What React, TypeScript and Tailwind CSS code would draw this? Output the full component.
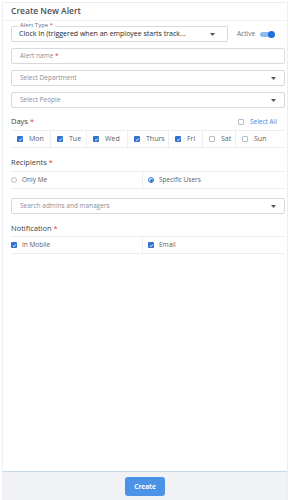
import React from "react";

const font = { fontFamily: '"Open Sans", "Noto Sans", Arial, sans-serif' };

function Caret() {
  return (
    <svg width="5" height="3" viewBox="0 0 5 3" className="shrink-0">
      <path d="M0 0 L5 0 L2.5 3 Z" fill="#555" />
    </svg>
  );
}

function Check({ on }: { on: boolean }) {
  if (!on)
    return <span className="w-[6px] h-[6px] shrink-0 rounded-[1px] border border-[#b8bcc2] bg-white" />;
  return (
    <span className="w-[6px] h-[6px] shrink-0 rounded-[1px] bg-[#2f72cf] flex items-center justify-center">
      <svg width="5" height="5" viewBox="0 0 10 10">
        <path d="M2 5.2 L4.2 7.3 L8 2.8" stroke="#fff" strokeWidth="1.8" fill="none" />
      </svg>
    </span>
  );
}

function Radio({ on }: { on: boolean }) {
  return on ? (
    <span className="w-[6px] h-[6px] shrink-0 rounded-full border border-[#2f72cf] bg-white flex items-center justify-center">
      <span className="w-[3px] h-[3px] rounded-full bg-[#2f72cf]" />
    </span>
  ) : (
    <span className="w-[6px] h-[6px] shrink-0 rounded-full border border-[#b8bcc2] bg-white" />
  );
}

function Req() {
  return <span className="text-[#e53935]"> *</span>;
}

function SelectBox({ text, caret = true, mt }: { text: React.ReactNode; caret?: boolean; mt: string }) {
  return (
    <div className={`${mt} h-[16px] border border-[#d6dadf] rounded-[2px] bg-white flex items-center justify-between pl-[8px] pr-[8px]`}>
      <span className="text-[6.5px] text-[#8a8f96]">{text}</span>
      {caret && <Caret />}
    </div>
  );
}

export default function App() {
  const days: [string, boolean, string][] = [
    ["Mon", true, "w-[40px]"],
    ["Tue", true, "w-[36px]"],
    ["Wed", true, "w-[41px]"],
    ["Thurs", true, "w-[41px]"],
    ["Fri", true, "w-[34px]"],
    ["Sat", false, "w-[33px]"],
    ["Sun", false, "flex-1"],
  ];
  return (
    <div className="w-[291px] h-[500px] bg-white flex" style={font}>
      <div className="ml-[2px] mt-[2px] w-[286px] h-[498px] border-x border-t border-[#eceef1] flex flex-col">
        <div className="h-[18px] border-b border-[#f0f1f3] flex items-center pl-[8px]">
          <span className="text-[8.5px] font-semibold text-[#4a4f55]">Create New Alert</span>
        </div>
        <div className="flex-1 pl-[8px] pr-[2px] flex flex-col">
          <div className="mt-[5px] flex items-center">
            <div className="relative w-[217px] h-[16px] border border-[#d6dadf] rounded-[2px] flex items-center justify-between pl-[7px] pr-[12px]">
              <span className="absolute -top-[5px] left-[6px] bg-white px-[2px] text-[6px] leading-[7px] text-[#6b7078]">
                Alert Type<Req />
              </span>
              <span className="text-[7px] text-[#23272c] whitespace-nowrap">
                Clock In (triggered when an employee starts track...
              </span>
              <Caret />
            </div>
            <span className="ml-[9px] text-[6.5px] text-[#6b7078]">Active</span>
            <span className="ml-[5px] relative w-[14px] h-[5px] rounded-full bg-[#8fbbef] flex items-center">
              <span className="absolute right-[-1px] w-[7px] h-[7px] rounded-full bg-[#1f6fd8]" />
            </span>
          </div>
          <SelectBox mt="mt-[6px]" caret={false} text={<>Alert name<Req /></>} />
          <SelectBox mt="mt-[6px]" text="Select Department" />
          <SelectBox mt="mt-[6px]" text="Select People" />

          <div className="mt-[8px] h-[12px] flex items-center justify-between">
            <span className="text-[7.5px] font-medium text-[#3a3f45]">Days<Req /></span>
            <span className="flex items-center gap-[6px] pr-[8px]">
              <Check on={false} />
              <span className="text-[6.5px] text-[#4a86d8]">Select All</span>
            </span>
          </div>
          <div className="mt-[2px] h-[18px] border-y border-[#eceef1] flex">
            {days.map(([d, on, w], i) => (
              <div
                key={d}
                className={`${w} flex items-center gap-[6px] pl-[6px] ${i < 6 ? "border-r border-[#eceef1]" : ""}`}
              >
                <Check on={on} />
                <span className="text-[7px] text-[#5b6067]">{d}</span>
              </div>
            ))}
          </div>

          <div className="mt-[9px] h-[12px] flex items-center">
            <span className="text-[7.5px] font-medium text-[#3a3f45]">Recipients<Req /></span>
          </div>
          <div className="mt-[2px] h-[18px] border-y border-[#eceef1] flex">
            <div className="w-[132px] border-r border-[#eceef1] flex items-center gap-[5px]">
              <Radio on={false} />
              <span className="text-[6.5px] text-[#5b6067]">Only Me</span>
            </div>
            <div className="flex-1 flex items-center gap-[5px] pl-[5px]">
              <Radio on={true} />
              <span className="text-[6.5px] text-[#5b6067]">Specific Users</span>
            </div>
          </div>

          <SelectBox mt="mt-[9px]" text="Search admins and managers" />

          <div className="mt-[9px] h-[12px] flex items-center">
            <span className="text-[7.5px] font-medium text-[#3a3f45]">Notification<Req /></span>
          </div>
          <div className="mt-[1px] h-[18px] border-y border-[#eceef1] flex">
            <div className="w-[132px] border-r border-[#eceef1] flex items-center gap-[5px]">
              <Check on={true} />
              <span className="text-[6.5px] text-[#5b6067]">In Mobile</span>
            </div>
            <div className="flex-1 flex items-center gap-[5px] pl-[5px]">
              <Check on={true} />
              <span className="text-[6.5px] text-[#5b6067]">Email</span>
            </div>
          </div>
        </div>
        <div className="h-[29px] border-t border-[#c8d7e5] bg-[#f0f2f5] flex items-start justify-center pt-[5px]">
          <button className="w-[40px] h-[19px] rounded-[3px] bg-[#4a93e6] text-white text-[6.5px] font-bold">
            Create
          </button>
        </div>
      </div>
    </div>
  );
}
